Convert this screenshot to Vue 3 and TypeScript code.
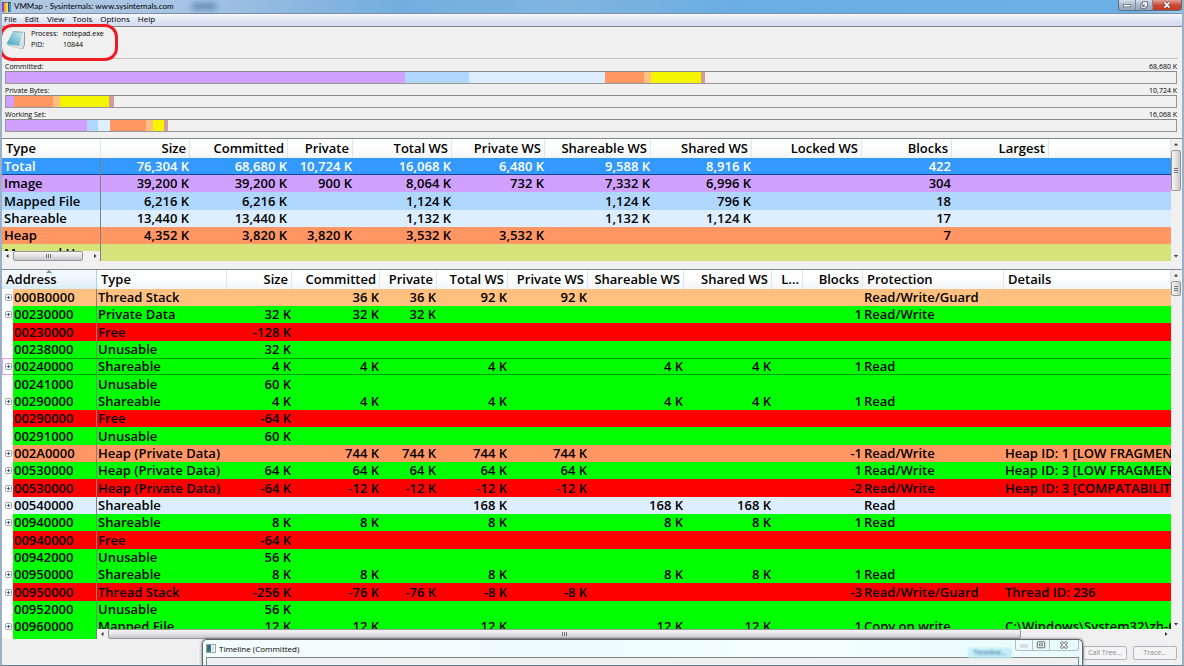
<script setup lang="ts">
import { ref } from 'vue'

interface Meter {
  label: string
  total: string
  parts: [string, number][]
}
interface SummaryRow {
  type: string
  tone: string
  values: string[]
}
interface RegionRow {
  address: string
  tone: string
  expandable: boolean
  type: string
  values: string[]
  protection: string
  details: string
}

const menus = ['File', 'Edit', 'View', 'Tools', 'Options', 'Help']

const METER_UNITS = 1171
const meters: Meter[] = [
  {
    label: 'Committed:',
    total: '68,680 K',
    parts: [['image', 399], ['mapped', 64], ['shareable', 137], ['heap', 39], ['stack', 7], ['private', 50], ['table', 4]],
  },
  {
    label: 'Private Bytes:',
    total: '10,724 K',
    parts: [['image', 8], ['heap', 39], ['stack', 7], ['private', 49], ['table', 5]],
  },
  {
    label: 'Working Set:',
    total: '16,068 K',
    parts: [['image', 81], ['mapped', 11], ['shareable', 12], ['heap', 36], ['stack', 7], ['private', 11], ['table', 4]],
  },
]
const partWidth = (units: number) => ({ width: `${(units / METER_UNITS) * 100}%` })

const summaryHeads = ['Size', 'Committed', 'Private', 'Total WS', 'Private WS', 'Shareable WS', 'Shared WS', 'Locked WS', 'Blocks', 'Largest']
const summary: SummaryRow[] = [
  { type: 'Total', tone: 'total', values: ['76,304 K', '68,680 K', '10,724 K', '16,068 K', '6,480 K', '9,588 K', '8,916 K', '', '422', ''] },
  { type: 'Image', tone: 'image', values: ['39,200 K', '39,200 K', '900 K', '8,064 K', '732 K', '7,332 K', '6,996 K', '', '304', ''] },
  { type: 'Mapped File', tone: 'mapped', values: ['6,216 K', '6,216 K', '', '1,124 K', '', '1,124 K', '796 K', '', '18', ''] },
  { type: 'Shareable', tone: 'shareable', values: ['13,440 K', '13,440 K', '', '1,132 K', '', '1,132 K', '1,124 K', '', '17', ''] },
  { type: 'Heap', tone: 'heap', values: ['4,352 K', '3,820 K', '3,820 K', '3,532 K', '3,532 K', '', '', '', '7', ''] },
  { type: 'Managed Heap', tone: 'managed', values: ['', '', '', '', '', '', '', '', '', ''] },
]

const regionHeads = ['Size', 'Committed', 'Private', 'Total WS', 'Private WS', 'Shareable WS', 'Shared WS', 'L...', 'Blocks']

function region(
  address: string, tone: string, expandable: boolean, type: string,
  values: string, protection = '', details = '',
): RegionRow {
  return { address, tone, expandable, type, values: values.split('|'), protection, details }
}
const regions: RegionRow[] = [
  region('000B0000', 'stack', true, 'Thread Stack', '|36 K|36 K|92 K|92 K||||', 'Read/Write/Guard'),
  region('00230000', 'added', true, 'Private Data', '32 K|32 K|32 K||||||1', 'Read/Write'),
  region('00230000', 'removed', false, 'Free', '-128 K||||||||'),
  region('00238000', 'added', false, 'Unusable', '32 K||||||||'),
  region('00240000', 'added', true, 'Shareable', '4 K|4 K||4 K||4 K|4 K||1', 'Read'),
  region('00241000', 'added', false, 'Unusable', '60 K||||||||'),
  region('00290000', 'added', true, 'Shareable', '4 K|4 K||4 K||4 K|4 K||1', 'Read'),
  region('00290000', 'removed', false, 'Free', '-64 K||||||||'),
  region('00291000', 'added', false, 'Unusable', '60 K||||||||'),
  region('002A0000', 'heap', true, 'Heap (Private Data)', '|744 K|744 K|744 K|744 K||||-1', 'Read/Write', 'Heap ID: 1 [LOW FRAGMENTATION]'),
  region('00530000', 'added', true, 'Heap (Private Data)', '64 K|64 K|64 K|64 K|64 K||||1', 'Read/Write', 'Heap ID: 3 [LOW FRAGMENTATION]'),
  region('00530000', 'removed', true, 'Heap (Private Data)', '-64 K|-12 K|-12 K|-12 K|-12 K||||-2', 'Read/Write', 'Heap ID: 3 [COMPATABILITY]'),
  region('00540000', 'shareable', true, 'Shareable', '|||168 K||168 K|168 K||', 'Read'),
  region('00940000', 'added', true, 'Shareable', '8 K|8 K||8 K||8 K|8 K||1', 'Read'),
  region('00940000', 'removed', false, 'Free', '-64 K||||||||'),
  region('00942000', 'added', false, 'Unusable', '56 K||||||||'),
  region('00950000', 'added', true, 'Shareable', '8 K|8 K||8 K||8 K|8 K||1', 'Read'),
  region('00950000', 'removed', true, 'Thread Stack', '-256 K|-76 K|-76 K|-8 K|-8 K||||-3', 'Read/Write/Guard', 'Thread ID: 236'),
  region('00952000', 'added', false, 'Unusable', '56 K||||||||'),
  region('00960000', 'added', true, 'Mapped File', '12 K|12 K||12 K||12 K|12 K||1', 'Copy on write', 'C:\\Windows\\System32\\zh-CN\\notepad.exe.mui'),
  region('00963000', 'added', false, 'Unusable', '52 K||||||||'),
]
const focused = ref(4)
</script>

<template>
  <div class="window">
    <header class="titlebar">
      <svg class="app-icon" viewBox="0 0 10 10" aria-hidden="true">
        <rect width="10" height="10" fill="#333a55" />
        <rect x="0" width="3" height="10" fill="#8a3fe0" />
        <rect x="3" width="2" height="10" fill="#f7a821" />
        <rect x="5" width="2" height="10" fill="#fbe23a" />
        <rect x="7" width="1" height="10" fill="#5a5040" />
        <rect x="8" width="2" height="10" fill="#2d8ff0" />
        <rect width="10" height="1" fill="#333a55" fill-opacity=".6" />
      </svg>
      <h1>VMMap - Sysinternals: www.sysinternals.com</h1>
      <span class="glass"></span>
      <div class="controls">
        <button type="button" aria-label="Minimize"><svg viewBox="0 0 10 8"><rect x="1.5" y="3.5" width="7" height="2.4" fill="#fff" stroke="#596575" stroke-width=".7" /></svg></button>
        <button type="button" aria-label="Restore"><svg viewBox="0 0 10 8"><path d="M3.5.7h5v5h-1.5v1.6h-5v-5h1.5z" fill="#fff" stroke="#4e5967" stroke-width=".8" /><rect x="3.6" y="3.8" width="1.8" height="1.8" fill="#8994a3" stroke="#4e5967" stroke-width=".6" /></svg></button>
        <button type="button" class="close" aria-label="Close"><svg viewBox="0 0 10 8"><path d="M2.3 1.2l5.4 5.6M7.7 1.2L2.3 6.8" stroke="#5e3538" stroke-width="3" /><path d="M2.5 1.4l5 5.2M7.5 1.4l-5 5.2" stroke="#fff" stroke-width="1.7" /></svg></button>
      </div>
    </header>

    <nav class="menubar">
      <button v-for="m in menus" :key="m" type="button">{{ m }}</button>
    </nav>

    <section class="process">
      <svg class="notepad" viewBox="0 0 20 20" aria-hidden="true">
        <defs>
          <linearGradient id="cover" x1="0" y1="1" x2="1" y2="0">
            <stop offset="0" stop-color="#3c9dbb" />
            <stop offset=".55" stop-color="#8fcadb" />
            <stop offset="1" stop-color="#d7edf2" />
          </linearGradient>
        </defs>
        <path d="M7 1.5L19 2.2 18.8 15 17 19 2 15.5z" fill="#8d8573" />
        <path d="M7 1.5L18 2 18 15 16 18.8 2 15z" fill="#f5f7f7" stroke="#b3bcc0" stroke-width=".5" />
        <path d="M7 1.3L17.3 2.2 13.5 16.2 0.5 14z" fill="url(#cover)" />
        <path d="M14 16.8L17.5 6 17.8 15 16.2 18.2z" fill="#d6dcde" />
        <path d="M7 1.6l10 .8" stroke="#8b9499" stroke-dasharray="1 .6" />
      </svg>
      <dl>
        <dt>Process:</dt><dd>notepad.exe</dd>
        <dt>PID:</dt><dd>10844</dd>
      </dl>
      <span class="marker"></span>
    </section>

    <section class="meters">
      <div v-for="m in meters" :key="m.label" class="meter">
        <div class="meter-head"><span>{{ m.label }}</span><span>{{ m.total }}</span></div>
        <div class="bar">
          <span v-for="([tone, units], i) in m.parts" :key="i" :class="tone" :style="partWidth(units)"></span>
        </div>
      </div>
    </section>

    <section class="pane summary">
      <div class="grid">
        <table>
          <colgroup>
            <col class="w99"><col class="w89"><col class="w98"><col class="w65"><col class="w99"><col class="w93">
            <col class="w106"><col class="w101"><col class="w110"><col class="w90"><col class="w97"><col>
          </colgroup>
          <thead>
            <tr><th class="left" scope="col">Type</th><th v-for="h in summaryHeads" :key="h" scope="col">{{ h }}</th><th></th></tr>
          </thead>
          <tbody>
            <tr v-for="r in summary" :key="r.type" :class="r.tone">
              <td class="left frozen">{{ r.type }}</td>
              <td v-for="(v, i) in r.values" :key="i">{{ v }}</td>
              <td></td>
            </tr>
          </tbody>
        </table>
        <div class="hscroll">
          <svg class="arrow" viewBox="0 0 10 10"><path d="M6.5 3v4L4 5z" fill="#333" /></svg>
          <span class="thumb"><i class="grip"></i></span>
          <svg class="arrow" viewBox="0 0 10 10"><path d="M4 3v4L6.5 5z" fill="#333" /></svg>
        </div>
      </div>
      <div class="vscroll">
        <svg class="arrow" viewBox="0 0 10 10"><path d="M3 6.5h4L5 4z" fill="#333" /></svg>
        <span class="thumb"><i class="grip"></i></span>
        <svg class="arrow" viewBox="0 0 10 10"><path d="M3 4h4L5 6.5z" fill="#333" /></svg>
      </div>
    </section>

    <section class="pane details">
      <div class="grid">
        <table>
          <colgroup>
            <col class="w11"><col class="w84"><col class="w130"><col class="w65"><col class="w88"><col class="w57"><col class="w71">
            <col class="w80"><col class="w96"><col class="w88"><col class="w31"><col class="w60"><col class="w141"><col>
          </colgroup>
          <thead>
            <tr>
              <th class="left sorted" colspan="2" scope="col">Address
                <svg class="sort" viewBox="0 0 6 3"><path d="M0 3L3 0l3 3z" fill="#5f8fa8" /></svg>
              </th>
              <th class="left" scope="col">Type</th>
              <th v-for="h in regionHeads" :key="h" scope="col">{{ h }}</th>
              <th class="left" scope="col">Protection</th>
              <th class="left" scope="col">Details</th>
            </tr>
          </thead>
          <tbody>
            <tr v-for="(r, n) in regions" :key="n" :class="[r.tone, { focus: n === focused }]" @click="focused = n">
              <td class="gutter">
                <button v-if="r.expandable" type="button" :aria-label="`Expand ${r.address}`">
                  <svg viewBox="0 0 7 7"><rect x=".5" y=".5" width="6" height="6" rx="1" fill="#f6f6f6" stroke="#a2a2a2" /><path d="M2 3.5h3M3.5 2v3" stroke="#3d5aa0" /></svg>
                </button>
              </td>
              <td class="left frozen">{{ r.address }}</td>
              <td class="left">{{ r.type }}</td>
              <td v-for="(v, i) in r.values" :key="i">{{ v }}</td>
              <td class="left">{{ r.protection }}</td>
              <td class="left">{{ r.details }}</td>
            </tr>
          </tbody>
        </table>
        <div class="hscroll">
          <svg class="arrow" viewBox="0 0 10 10"><path d="M6.5 3v4L4 5z" fill="#333" /></svg>
          <span class="thumb"><i class="grip"></i></span>
          <svg class="arrow" viewBox="0 0 10 10"><path d="M4 3v4L6.5 5z" fill="#333" /></svg>
        </div>
      </div>
      <div class="vscroll">
        <svg class="arrow" viewBox="0 0 10 10"><path d="M3 6.5h4L5 4z" fill="#333" /></svg>
        <span class="thumb"><i class="grip"></i></span>
        <svg class="arrow" viewBox="0 0 10 10"><path d="M3 4h4L5 6.5z" fill="#333" /></svg>
      </div>
    </section>

    <footer class="actions">
      <button type="button" disabled>Call Tree...</button>
      <button type="button" disabled>Trace...</button>
    </footer>

    <aside class="timeline">
      <div class="timeline-title">
        <svg class="timeline-icon" viewBox="0 0 10 9"><rect x=".5" y=".5" width="9" height="8" fill="#fafafa" stroke="#9aa3a8" /><rect x="1" y="1" width="4" height="7" fill="#2f7d6b" /><rect x="2" y="2" width="2" height="3" fill="#2a5fa8" /><rect x="6" y="2" width="2" height="5" fill="#d5dde0" /></svg>
        <h2>Timeline (Committed)</h2>
        <span class="ghost">Timeline...</span>
        <div class="controls">
          <button type="button" aria-label="Minimize timeline"><svg viewBox="0 0 10 8"><rect x="1.5" y="4" width="7" height="2" rx=".5" fill="#fff" stroke="#a3abb0" stroke-width=".7" /></svg></button>
          <button type="button" aria-label="Maximize timeline"><svg viewBox="0 0 10 8"><rect x="1.3" y=".8" width="7.4" height="6" rx=".5" fill="#fff" stroke="#4c565e" stroke-width=".9" /><rect x="3.6" y="2.8" width="2.8" height="2" fill="#fff" stroke="#4c565e" stroke-width=".8" /></svg></button>
          <button type="button" class="close" aria-label="Close timeline"><svg viewBox="0 0 10 8"><path d="M2 1l6 6M8 1L2 7" stroke="#4c565e" stroke-width="3" /><path d="M2.3 1.3l5.4 5.4M7.7 1.3L2.3 6.7" stroke="#fff" stroke-width="1.4" /></svg></button>
        </div>
      </div>
      <div class="timeline-body"></div>
    </aside>
  </div>
</template>

<style>
body {
  margin: 0;
  overflow: hidden;
}
</style>

<style scoped>
.window {
  position: relative;
  box-sizing: border-box;
  display: flex;
  flex-direction: column;
  height: 100vh;
  overflow: hidden;
  border: solid #9db1c6;
  border-width: 0 2px 1px;
  border-bottom-color: #6d7f8f;
  background: #f0f0f0;
  color: #000;
  font-family: "Open Sans", "Noto Sans", sans-serif;
}
button {
  margin: 0;
  padding: 0;
  border: 0;
  background: none;
  color: inherit;
  font: inherit;
}
svg {
  display: block;
}

.titlebar {
  display: flex;
  flex: none;
  align-items: center;
  height: 14px;
  margin: 0 -2px;
  padding-left: 1px;
  box-sizing: border-box;
  border-bottom: 1px solid #7e8ea3;
  background: linear-gradient(90deg, #b3c9e2, #a5c4e4 16%, #8ab6df 26%, #71aedf 34%, #80b5df 48%, #6aade2 62%, #6cb1e6 96%, #9ed0ee);
}
.app-icon {
  width: 10px;
  height: 10px;
}
.titlebar h1 {
  margin: 0 0 0 3px;
  font-family: Lato, "Open Sans", sans-serif;
  font-size: 8px;
  font-weight: 400;
  line-height: 13px;
}
.glass {
  width: 24px;
  height: 5px;
  margin-left: 18px;
  background: #4d7ba8;
  filter: blur(3px);
}
.controls {
  display: flex;
  align-self: flex-start;
  margin-left: auto;
}
.controls button {
  display: grid;
  place-items: center;
  border-right: 1px solid #7c8997;
}
.controls svg {
  width: 10px;
  height: 8px;
}
.titlebar .controls {
  height: 11px;
  margin-right: 2px;
  box-sizing: border-box;
  border: solid #5f6f82;
  border-width: 0 1px 1px;
  border-radius: 0 0 3px 3px;
  overflow: hidden;
}
.titlebar .controls button {
  width: 17px;
  background: linear-gradient(#d3dee9, #a9b9ca 50%, #93a7bd);
}
.titlebar .controls .close {
  width: 28px;
  border: 0;
  background: linear-gradient(#e2a196, #cf4a35 50%, #c23c25);
}

.menubar {
  display: flex;
  flex: none;
  gap: 8px;
  height: 13px;
  padding: 0 2px 2px;
  box-sizing: border-box;
  border-bottom: 1px solid #858585;
  background: linear-gradient(#f8f9fd, #e3e8f5 40%, #d3daee);
}
.menubar button {
  font-size: 8px;
  line-height: 10px;
}

.process {
  position: relative;
  display: flex;
  flex: none;
  gap: 5px;
  height: 32px;
  margin: 0 4px 0 2px;
  padding-left: 2px;
  box-sizing: border-box;
  border-bottom: 1px solid #c2c2c2;
}
.notepad {
  width: 20px;
  height: 20px;
  margin-top: 3px;
}
.process dl {
  display: grid;
  grid-template-columns: 32px auto;
  align-content: start;
  margin: 1px 0 0;
  font-size: 7px;
  line-height: 11px;
}
.process dd {
  margin: 0;
}
.marker {
  position: absolute;
  top: -3px;
  left: -5px;
  width: 119px;
  height: 37px;
  box-sizing: border-box;
  border: 3px solid #ed1c24;
  border-radius: 13px;
}

.meters {
  display: grid;
  flex: none;
  gap: 2px;
  padding: 3px 5px 6px 3px;
}
.meter-head {
  display: flex;
  justify-content: space-between;
  height: 9px;
  font-size: 7px;
  line-height: 10px;
}
.bar {
  display: flex;
  height: 13px;
  box-sizing: border-box;
  border: 1px solid #989898;
  border-top-color: #8a8a8a;
}
.total { background: #3399ff; }
.image { background: #d0a0ff; }
.mapped { background: #b0d8ff; }
.shareable { background: #dceeff; }
.heap { background: #ff9664; }
.stack { background: #ffc080; }
.private { background: #f5f500; }
.table { background: #d09c9c; }
.managed { background: #d4e47a; }
.added { background: #00ff00; }
.removed { background: #ff0000; }

.pane {
  display: flex;
  min-height: 0;
  border-top: 1px solid #828790;
}
.summary {
  flex: none;
  height: 122px;
  margin-bottom: 8px;
}
.details {
  flex: 1;
}
.grid {
  position: relative;
  flex: 1;
  min-width: 0;
  overflow: hidden;
  background: #fff;
}
table {
  width: 100%;
  table-layout: fixed;
  border-collapse: separate;
  border-spacing: 0;
  font-size: 13px;
  font-weight: 600;
  line-height: 17px;
}
th {
  position: relative;
  height: 19px;
  padding: 0 3px 0 4px;
  box-sizing: border-box;
  border-right: 1px solid #e2e4e8;
  background: linear-gradient(#fff 40%, #f2f4f6);
  font-weight: 600;
  text-align: right;
  white-space: nowrap;
}
td {
  height: 17px;
  padding: 0 1px;
  overflow: hidden;
  text-align: right;
  white-space: nowrap;
}
tbody tr:nth-child(3n) td {
  height: 18px;
}
th.left,
td.left {
  text-align: left;
}
.frozen {
  border-right: 1px solid #808080;
}
.summary .frozen {
  padding-left: 2px;
}
.total td {
  color: #fff;
  box-shadow: inset 0 -1px #0c4a8c;
}
.focus td {
  box-shadow: inset 0 1px #009a00, inset 0 -1px #009a00;
}
.focus td.gutter {
  box-shadow: inset 1px 1px #f0a0f0, inset 0 -1px #f0a0f0;
}
.gutter {
  padding: 0 0 0 3px;
  background: #fff;
}
.gutter button,
.gutter svg {
  display: block;
  width: 7px;
  height: 7px;
}
.sorted {
  border-right-color: #96d9f9;
  background: linear-gradient(#f2f9fc 40%, #d8ecf6);
}
.sort {
  position: absolute;
  top: 0;
  left: 44px;
  width: 6px;
  height: 3px;
}
.w11 { width: 11px; }
.w31 { width: 31px; }
.w57 { width: 57px; }
.w60 { width: 60px; }
.w65 { width: 65px; }
.w71 { width: 71px; }
.w80 { width: 80px; }
.w84 { width: 84px; }
.w88 { width: 88px; }
.w89 { width: 89px; }
.w90 { width: 90px; }
.w93 { width: 93px; }
.w96 { width: 96px; }
.w97 { width: 97px; }
.w98 { width: 98px; }
.w99 { width: 99px; }
.w101 { width: 101px; }
.w106 { width: 106px; }
.w110 { width: 110px; }
.w130 { width: 130px; }
.w141 { width: 141px; }

.hscroll {
  position: absolute;
  bottom: 0;
  left: 0;
  display: flex;
  justify-content: space-between;
  height: 10px;
  background: #f0f0f0;
}
.summary .hscroll {
  width: 98px;
}
.details .hscroll {
  right: 0;
  left: 95px;
}
.arrow {
  flex: none;
  width: 10px;
  height: 10px;
}
.thumb {
  display: grid;
  place-items: center;
  box-sizing: border-box;
  border: 1px solid #979797;
  border-radius: 2px;
  background: linear-gradient(#f5f5f5, #e4e4e5 45%, #c6c7ca);
}
.hscroll .thumb {
  width: 70px;
  margin: 0 auto 0 1px;
}
.details .hscroll .thumb {
  flex: 0 1 85%;
}
.grip {
  width: 5px;
  height: 4px;
  background: repeating-linear-gradient(90deg, #777 0 1px, transparent 1px 2px);
}
.vscroll {
  display: flex;
  flex: none;
  flex-direction: column;
  width: 11px;
  background: #f0f0f0;
}
.vscroll .thumb {
  height: 41px;
  margin: 1px 1px auto 0;
  background: linear-gradient(90deg, #f5f5f5, #e4e4e5 45%, #c6c7ca);
}
.details .vscroll {
  padding-bottom: 10px;
}
.details .vscroll .thumb {
  height: 15px;
}
.vscroll .grip {
  width: 4px;
  height: 5px;
  background: repeating-linear-gradient(#777 0 1px, transparent 1px 2px);
}

.actions {
  display: flex;
  flex: none;
  justify-content: flex-end;
  gap: 6px;
  height: 26px;
  padding: 7px 5px 5px;
  box-sizing: border-box;
}
.actions button {
  width: 44px;
  border: 1px solid #b2b5b9;
  border-radius: 2px;
  background: #f4f4f4;
  color: #8a8a8a;
  font-size: 7px;
  line-height: 12px;
}

.timeline {
  position: absolute;
  right: 99px;
  bottom: -1px;
  left: 200px;
  display: flex;
  flex-direction: column;
  height: 27px;
  padding: 0 3px;
  box-sizing: border-box;
  border: 1px solid #5f6568;
  border-bottom: 0;
  border-radius: 5px 5px 0 0;
  background: linear-gradient(100deg, #f4fdfd, #effcff 40%, #f3ffff 70%, #e9fafd);
  box-shadow: 0 0 3px #555;
}
.timeline-title {
  display: flex;
  align-items: center;
  gap: 3px;
  height: 17px;
}
.timeline-icon {
  width: 10px;
  height: 9px;
}
.timeline h2 {
  margin: 0;
  font-size: 8px;
  font-weight: 400;
  line-height: 16px;
}
.ghost {
  width: 44px;
  margin-top: 8px;
  margin-left: auto;
  background: #c3eefa;
  color: #2b5f86;
  font-size: 7px;
  line-height: 10px;
  text-align: center;
  filter: blur(1px);
}
.timeline .controls {
  height: 11px;
  margin-left: 0;
  box-sizing: border-box;
  border: solid #b4bec2;
  border-width: 0 1px 1px;
  border-radius: 0 0 3px 3px;
}
.timeline .controls button {
  width: 17px;
  border-color: #b4bec2;
}
.timeline .controls .close {
  width: 28px;
  border: 0;
}
.timeline-body {
  flex: 1;
  border: solid #7f8789;
  border-width: 1px 1px 0;
  background: #f0f0f0;
}
</style>
